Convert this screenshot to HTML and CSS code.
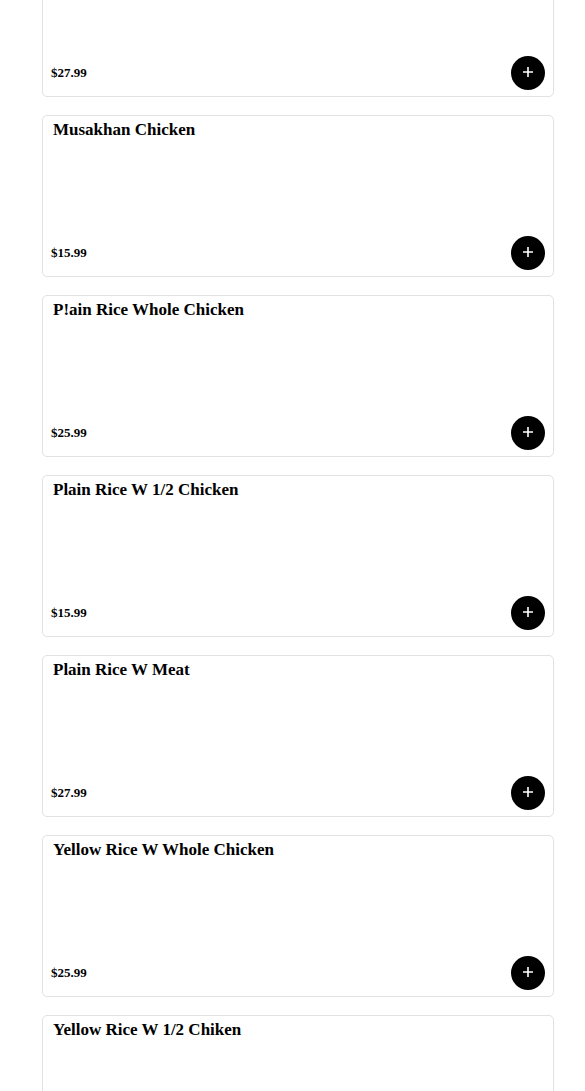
FILE: index.html
```html
<!DOCTYPE html>
<html lang="en">
<head>
    <meta charset="UTF-8">
    <meta name="viewport" content="width=device-width, initial-scale=1.0">
    <title>Menu</title>
    <link rel="stylesheet" href="styles.css">
</head>
<body>
    <div class="menu-list">
        <div class="item-card">
            <h3 class="item-name">Plain Rice W Lamb</h3>
            <div class="item-footer">
                <span class="item-price">$27.99</span>
                <button type="button" class="add-btn"><svg viewBox="0 0 12 12" width="12" height="12"><path d="M6 1v10M1 6h10" stroke="#fff" stroke-width="1.6" fill="none"/></svg></button>
            </div>
        </div>
        <div class="item-card">
            <h3 class="item-name">Musakhan Chicken</h3>
            <div class="item-footer">
                <span class="item-price">$15.99</span>
                <button type="button" class="add-btn"><svg viewBox="0 0 12 12" width="12" height="12"><path d="M6 1v10M1 6h10" stroke="#fff" stroke-width="1.6" fill="none"/></svg></button>
            </div>
        </div>
        <div class="item-card">
            <h3 class="item-name">P!ain Rice Whole Chicken</h3>
            <div class="item-footer">
                <span class="item-price">$25.99</span>
                <button type="button" class="add-btn"><svg viewBox="0 0 12 12" width="12" height="12"><path d="M6 1v10M1 6h10" stroke="#fff" stroke-width="1.6" fill="none"/></svg></button>
            </div>
        </div>
        <div class="item-card">
            <h3 class="item-name">Plain Rice W 1/2 Chicken</h3>
            <div class="item-footer">
                <span class="item-price">$15.99</span>
                <button type="button" class="add-btn"><svg viewBox="0 0 12 12" width="12" height="12"><path d="M6 1v10M1 6h10" stroke="#fff" stroke-width="1.6" fill="none"/></svg></button>
            </div>
        </div>
        <div class="item-card">
            <h3 class="item-name">Plain Rice W Meat</h3>
            <div class="item-footer">
                <span class="item-price">$27.99</span>
                <button type="button" class="add-btn"><svg viewBox="0 0 12 12" width="12" height="12"><path d="M6 1v10M1 6h10" stroke="#fff" stroke-width="1.6" fill="none"/></svg></button>
            </div>
        </div>
        <div class="item-card">
            <h3 class="item-name">Yellow Rice W Whole Chicken</h3>
            <div class="item-footer">
                <span class="item-price">$25.99</span>
                <button type="button" class="add-btn"><svg viewBox="0 0 12 12" width="12" height="12"><path d="M6 1v10M1 6h10" stroke="#fff" stroke-width="1.6" fill="none"/></svg></button>
            </div>
        </div>
        <div class="item-card">
            <h3 class="item-name">Yellow Rice W 1/2 Chiken</h3>
            <div class="item-footer">
                <span class="item-price">$15.99</span>
                <button type="button" class="add-btn"><svg viewBox="0 0 12 12" width="12" height="12"><path d="M6 1v10M1 6h10" stroke="#fff" stroke-width="1.6" fill="none"/></svg></button>
            </div>
        </div>
    </div>
</body>
</html>
```

FILE: styles.css
```css
body {
    margin: 0;
    background-color: #FFFFFF;
    color: #000000;
    font-family: 'Liberation Serif', 'Times New Roman', serif;
    overflow: hidden;
}
.menu-list {
    display: flex;
    flex-direction: column;
    gap: 18px;
    width: 512px;
    margin: -65px 0 0 42px;
}
.item-card {
    box-sizing: border-box;
    height: 162px;
    border: 1px solid #e2e2e2;
    border-radius: 5px;
    padding: 4px 8px 6px 8px;
    display: flex;
    flex-direction: column;
    justify-content: space-between;
    background-color: #FFFFFF;
}
.item-name {
    margin: 0;
    padding-left: 2px;
    font-size: 17px;
    font-weight: bold;
}
.item-footer {
    display: flex;
    justify-content: space-between;
    align-items: center;
}
.item-price {
    font-size: 13px;
    font-weight: bold;
}
.add-btn {
    width: 34px;
    height: 34px;
    border-radius: 50%;
    border: none;
    padding: 0;
    background-color: #000000;
    display: flex;
    align-items: center;
    justify-content: center;
    cursor: pointer;
}
.add-btn svg {
    margin-top: -3px;
}
```
